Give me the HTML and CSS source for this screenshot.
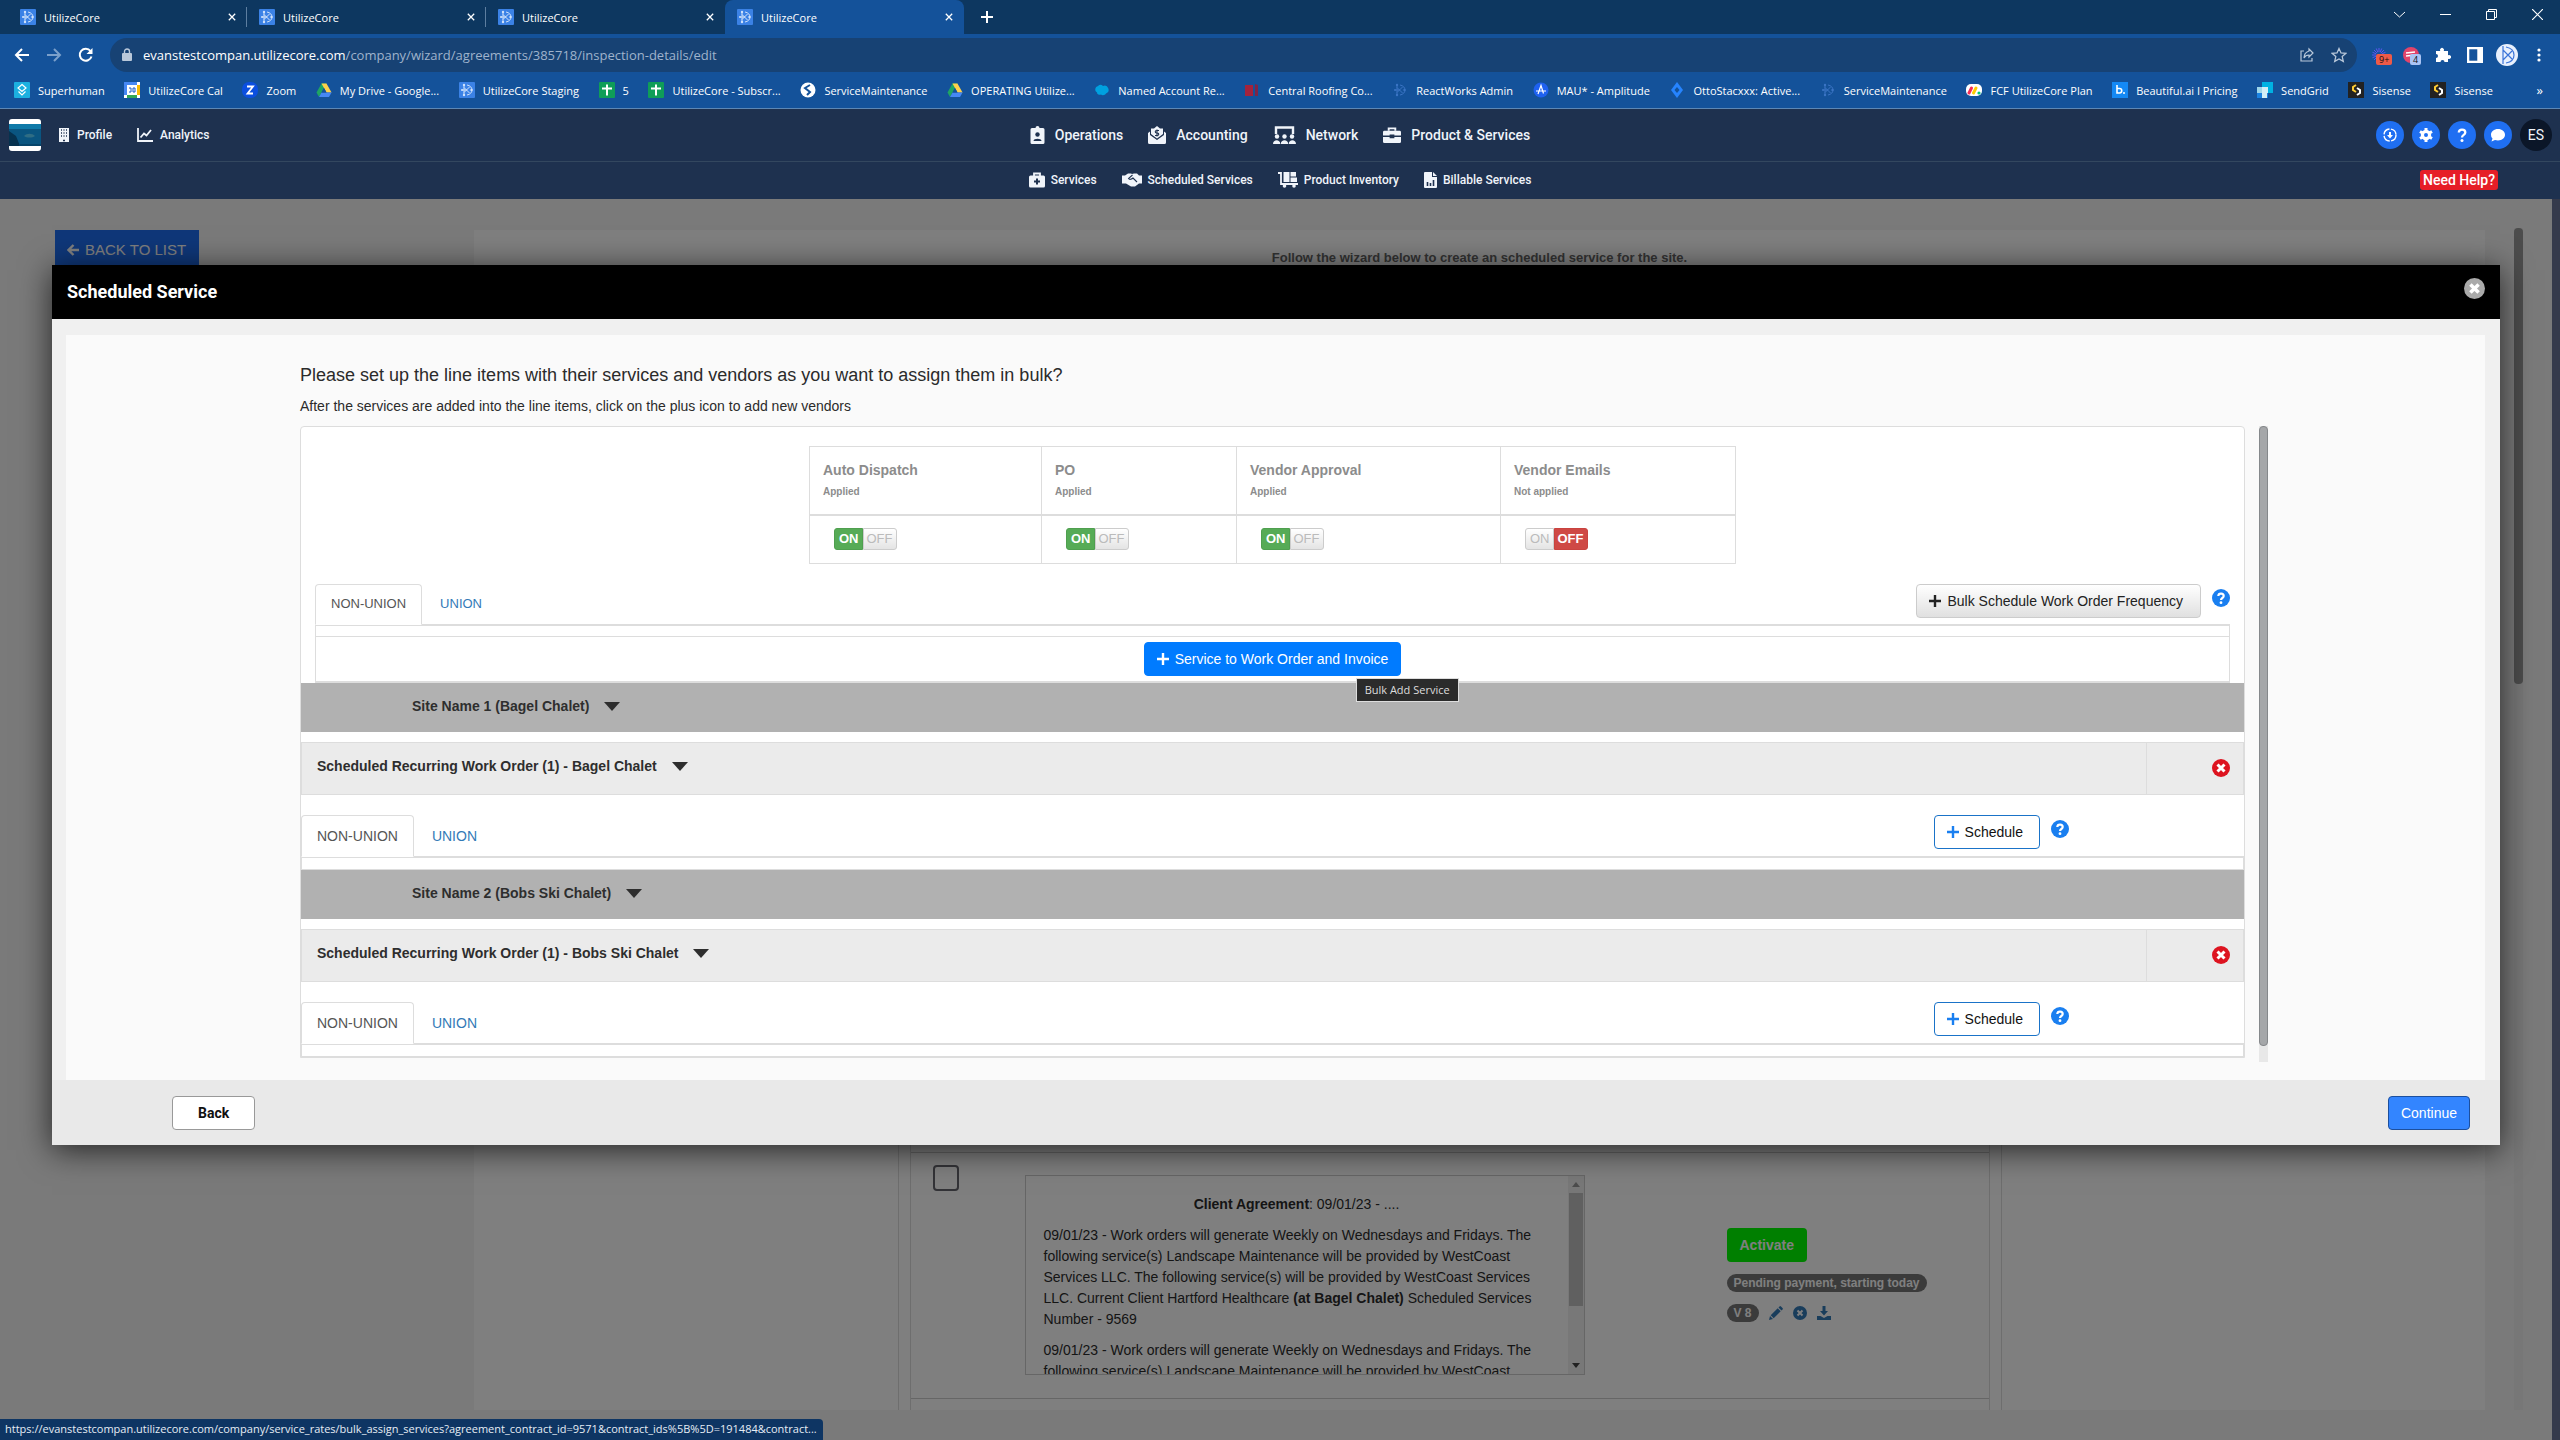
FILE: index.html
```html
<!DOCTYPE html>
<html lang="en">
<head>
    <meta charset="UTF-8">
    <meta name="viewport" content="width=device-width, initial-scale=1.0">
    <title>UtilizeCore</title>
    <link rel="stylesheet" href="styles.css">
</head>
<body>
    <!-- Icon sprite -->
    <svg class="sprite" aria-hidden="true">
        <symbol id="i-uc" viewBox="0 0 16 16"><rect width="16" height="16" rx="1" fill="#3b82e6"/><use href="#i-atom"/></symbol>
        <symbol id="i-atom" viewBox="0 0 16 16"><g fill="none" stroke="currentColor" stroke-width="1"><path d="M5 3v10M8 3c3 .500 5 2.500 5 5s-2 4.500-5 5M5 5.500L10.500 11M5 10.500L10.500 5M3 8h5"/></g><circle cx="5" cy="3" r="1.200" fill="currentColor"/><circle cx="12.500" cy="8" r="1.200" fill="currentColor"/><circle cx="5" cy="13" r="1.200" fill="currentColor"/><circle cx="3" cy="8" r="1" fill="currentColor"/></symbol>
        <symbol id="i-x" viewBox="0 0 10 10"><path d="M1 1l8 8M9 1L1 9" stroke="currentColor" stroke-width="1.600"/></symbol>
        <symbol id="i-plus" viewBox="0 0 12 12"><path d="M6 0v12M0 6h12" stroke="currentColor" stroke-width="2.400"/></symbol>
        <symbol id="i-back" viewBox="0 0 16 16"><path d="M15 8H2M8 2L2 8l6 6" fill="none" stroke="currentColor" stroke-width="2"/></symbol>
        <symbol id="i-reload" viewBox="0 0 16 16"><path d="M13.500 9.500A6 6 0 1 1 12.500 4" fill="none" stroke="currentColor" stroke-width="2"/><path d="M14.500 1v6h-6z" fill="currentColor"/></symbol>
        <symbol id="i-lock" viewBox="0 0 10 14"><rect y="5" width="10" height="8" rx="1" fill="currentColor"/><path d="M2.500 6V3.500a2.500 2.500 0 0 1 5 0V6" fill="none" stroke="currentColor" stroke-width="1.400"/></symbol>
        <symbol id="i-share" viewBox="0 0 16 16"><path d="M5 4H2v10h11v-3M10 2l4 4-4 4V8C7 8 6 9 5 11c0-4 2-6 5-7z" fill="none" stroke="currentColor" stroke-width="1.200"/></symbol>
        <symbol id="i-star" viewBox="0 0 16 16"><path d="M8 1.500l2 4.500 4.800.400-3.600 3.200 1.100 4.800L8 11.900l-4.300 2.500 1.100-4.800L1.200 6.400 6 6z" fill="none" stroke="currentColor" stroke-width="1.300"/></symbol>
        <symbol id="i-burst" viewBox="0 0 16 16"><path d="M8 1v14M1 8h14M3 3l10 10M13 3L3 13M5.300 1.500l5.400 13M1.500 10.700l13-5.400M1.500 5.300l13 5.400M10.700 1.500l-5.400 13" stroke="#5a55f0" stroke-width="1"/><circle cx="8" cy="8" r="3" fill="#14529a"/></symbol>
        <symbol id="i-puzzle" viewBox="0 0 16 16"><path d="M1 4h4.300a2 2 0 1 1 3.400 0H13v4.300a2 2 0 1 1 0 3.400V15H9.500a2 2 0 1 0-4 0H1v-4a2 2 0 1 0 0-4z" fill="currentColor"/></symbol>
        <symbol id="i-side" viewBox="0 0 14 14"><rect x="1" y="1" width="12" height="12" fill="none" stroke="currentColor" stroke-width="2"/><rect x="9" y="1" width="4" height="12" fill="currentColor"/></symbol>
        <symbol id="i-avatar" viewBox="0 0 22 22"><circle cx="11" cy="11" r="11" fill="#e8f0fd"/><path d="M7 2v18M7 6l9 9M7 16l9-9M10 3c5 1 8 4 8 8s-3 7-8 8" fill="none" stroke="#3b74d8" stroke-width="1.200"/></symbol>
        <symbol id="i-dots" viewBox="0 0 4 16"><circle cx="2" cy="3" r="1.600" fill="currentColor"/><circle cx="2" cy="8" r="1.600" fill="currentColor"/><circle cx="2" cy="13" r="1.600" fill="currentColor"/></symbol>
        <symbol id="i-drive" viewBox="0 0 16 16"><path d="M5.500 1.500h5L8 6 3 15 .500 10.500z" fill="#1fa463"/><path d="M5.500 1.500h5l5 9h-5z" fill="#ffd04b"/><path d="M3 15l2.500-4.500h10L13 15z" fill="#4688f4"/><path d="M8 6l2.500 4.500h-5z" fill="#14529a"/></symbol>
        <symbol id="i-super" viewBox="0 0 16 16"><rect width="16" height="16" rx="1" fill="#1cb0e0"/><path d="M8 2.500L12 6 8 9.500 4 6zM4.500 9.500L8 13l3.500-3.500" fill="none" stroke="#fff" stroke-width="1.200"/></symbol>
        <symbol id="i-cal" viewBox="0 0 16 16"><rect width="16" height="16" fill="#fff"/><path d="M0 0h13v3H3v10H0z" fill="#4688f4"/><path d="M13 3h3v10h-3z" fill="#fbbc04"/><path d="M3 13h10v3H3z" fill="#34a853"/><path d="M5 6h2v4H5M9 6h2v4H9z" fill="none" stroke="#1a5dc8"/></symbol>
        <symbol id="i-zoom" viewBox="0 0 16 16"><rect width="16" height="16" rx="7" fill="#0b4fe0"/><path d="M5 4.500h6L5.500 11.500H11" fill="none" stroke="#fff" stroke-width="1.800"/></symbol>
        <symbol id="i-sheet" viewBox="0 0 16 16"><rect width="16" height="16" rx="1" fill="#0f9d58"/><path d="M8 2.500v11M3 6.500h10" stroke="#fff" stroke-width="2"/></symbol>
        <symbol id="i-globe" viewBox="0 0 16 16"><circle cx="8" cy="8" r="7.500" fill="#fff"/><path d="M10 3L5 6l5 4-3 3" fill="none" stroke="#14529a" stroke-width="2"/></symbol>
        <symbol id="i-cloud" viewBox="0 0 16 16"><path d="M4 4a3.500 3.500 0 0 1 5 0 3.500 3.500 0 1 1 3 7.500c-1 2-4 2-5 1-3 1-4-1-4-2A3.500 3.500 0 0 1 4 4z" fill="#00a1e0"/></symbol>
        <symbol id="i-roof" viewBox="0 0 16 16"><path d="M1 3h8v11H1z" fill="#a3233c"/><path d="M11 2l3 1v11h-3z" fill="#7d2547"/></symbol>
        <symbol id="i-amp" viewBox="0 0 16 16"><circle cx="8" cy="8" r="7.500" fill="#1e61f0"/><path d="M3 9h10M5 12L8 3.500l2.500 8" fill="none" stroke="#fff" stroke-width="1.200"/></symbol>
        <symbol id="i-otto" viewBox="0 0 16 16"><path d="M8 0l6 8-6 8-6-8z" fill="#2684ff"/><path d="M8 5l2.500 3L8 11 5.500 8z" fill="#14529a"/></symbol>
        <symbol id="i-monday" viewBox="0 0 16 16"><rect y="2" width="16" height="12" rx="5" fill="#fff"/><path d="M3 11l2.500-5" stroke="#f62b54" stroke-width="3" stroke-linecap="round"/><path d="M7.500 11L10 6" stroke="#fc0" stroke-width="3" stroke-linecap="round"/><circle cx="13" cy="11" r="1.600" fill="#00c875"/></symbol>
        <symbol id="i-grid" viewBox="0 0 16 16"><path d="M5 0h11v11H5z" fill="#00b2e3"/><path d="M0 5h5v6H0z" fill="#9dd6ea"/><path d="M5 11h6v5H5zM0 11h5v5H0z" fill="#1a82e2"/><path d="M5 5h6v6H5zM5 11h5v5H5z" fill="#d3eef7"/></symbol>
        <symbol id="i-sis" viewBox="0 0 16 16"><rect width="16" height="16" fill="#222"/><path d="M8 3L5 5v3l3 2" fill="none" stroke="#fc3" stroke-width="2"/><path d="M9 6l3 2v3l-3 2" fill="none" stroke="#fff" stroke-width="2"/></symbol>
        <symbol id="i-bai" viewBox="0 0 16 16"><rect width="16" height="16" fill="#1489f5"/><path d="M5 3v8h2.500a2 2 0 0 0 0-4.500H5" fill="none" stroke="#fff" stroke-width="1.600"/><circle cx="12" cy="11" r="1" fill="#fff"/></symbol>

        <symbol id="i-building" viewBox="0 0 12 14"><path d="M1 0h10v14H1z" fill="currentColor"/><path d="M3 2h1M5.500 2h1M8 2h1M3 5h1M5.500 5h1M8 5h1M3 8h1M5.500 8h1M8 8h1M5 12.500h2" stroke="#1e314f" stroke-width="1.400"/></symbol>
        <symbol id="i-chart" viewBox="0 0 16 14"><path d="M1 0v13h15M3.500 9.500L7 5.500l2.500 2L14 2" fill="none" stroke="currentColor" stroke-width="1.800"/></symbol>
        <symbol id="i-badge" viewBox="0 0 15 18"><path d="M2 2h3.500a2 2 0 0 1 4 0H13a1.500 1.500 0 0 1 1.500 1.500v13A1.500 1.500 0 0 1 13 18H2A1.500 1.500 0 0 1 .500 16.500v-13A1.500 1.500 0 0 1 2 2z" fill="currentColor"/><circle cx="7.500" cy="8.500" r="2.200" fill="#1e314f"/><path d="M3.500 15c0-3 8-3 8 0z" fill="#1e314f"/></symbol>
        <symbol id="i-money" viewBox="0 0 18 18"><path d="M0 7l2-1.500V9l7 5 7-5V5.500L18 7v9.500a1.500 1.500 0 0 1-1.500 1.500h-15A1.500 1.500 0 0 1 0 16.500z" fill="currentColor"/><path d="M3 2.500h3L9 0l3 2.500h3V8l-6 4.500L3 8z" fill="currentColor"/><path d="M11 4.500H8.500a1.200 1.200 0 0 0 0 2.500h1a1.200 1.200 0 0 1 0 2.500H7M9 3.500v7" fill="none" stroke="#1e314f" stroke-width="1.100"/></symbol>
        <symbol id="i-network" viewBox="0 0 23 18"><path d="M3 8V1.500h17V8" fill="none" stroke="currentColor" stroke-width="2.400"/><circle cx="4" cy="10.500" r="2.200" fill="currentColor"/><circle cx="11.500" cy="10.500" r="2.200" fill="currentColor"/><circle cx="19" cy="10.500" r="2.200" fill="currentColor"/><path d="M0 18c0-5 7.300-5 7.300 0zM7.800 18c0-5 7.400-5 7.400 0zM15.700 18c0-5 7.300-5 7.300 0z" fill="currentColor"/></symbol>
        <symbol id="i-case" viewBox="0 0 19 17"><path d="M6 4V1.500h7V4" fill="none" stroke="currentColor" stroke-width="2"/><path d="M1.500 4h16A1.500 1.500 0 0 1 19 5.500V9h-7V8H7v1H0V5.500A1.500 1.500 0 0 1 1.500 4zM0 10.500h7v1.500h5v-1.500h7v5a1.500 1.500 0 0 1-1.500 1.500h-16A1.500 1.500 0 0 1 0 15.500z" fill="currentColor"/></symbol>
        <symbol id="i-medkit" viewBox="0 0 16 15"><path d="M5 4V1h6v3" fill="none" stroke="currentColor" stroke-width="1.800"/><rect y="3" width="16" height="12" rx="1.500" fill="currentColor"/><path d="M8 6v6M5 9h6" stroke="#1e314f" stroke-width="2"/></symbol>
        <symbol id="i-shake" viewBox="0 0 20 13"><path d="M0 2h3l3-2h3l1 .600L12 0h3l2 2h3v8h-3l-4 3H9L4 10H0z" fill="currentColor"/><path d="M10.500 1.500L6.500 5c1 1.500 3 .800 4.500-.500l4 4" fill="none" stroke="#1e314f" stroke-width="1.100"/></symbol>
        <symbol id="i-dolly" viewBox="0 0 20 16"><path d="M0 1h3v11h17" fill="none" stroke="currentColor" stroke-width="1.800"/><path d="M5.500 0h6v10h-6zM12.500 0H18v4.500h-5.500zM12.500 5.500H19V10h-6.500z" fill="currentColor"/><circle cx="6.500" cy="14" r="1.800" fill="currentColor"/><circle cx="16" cy="14" r="1.800" fill="currentColor"/></symbol>
        <symbol id="i-file" viewBox="0 0 13 16"><path d="M1 0h7v5h5v10a1 1 0 0 1-1 1H1a1 1 0 0 1-1-1V1a1 1 0 0 1 1-1zM9 0l4 4H9z" fill="currentColor"/><path d="M3.500 10v4M6.500 11v3M9.500 8v6" stroke="#1e314f" stroke-width="1.600"/></symbol>
        <symbol id="i-down" viewBox="0 0 16 16"><circle cx="8" cy="8" r="6" fill="none" stroke="#fff" stroke-width="1.400" stroke-dasharray="8 1.500"/><path d="M8 5v4" stroke="#fff" stroke-width="2"/><path d="M5 8h6l-3 3.500z" fill="#fff"/></symbol>
        <symbol id="i-gear" viewBox="0 0 16 16"><circle cx="8" cy="8" r="3.600" fill="none" stroke="#fff" stroke-width="3.200"/><path d="M8 1v3M8 12v3M2 4.500l2.500 1.500M11.500 10l2.500 1.500M14 4.500L11.500 6M4.500 10L2 11.500" stroke="#fff" stroke-width="3"/></symbol>
        <symbol id="i-q" viewBox="0 0 16 16"><path d="M4.800 5.500C5 1.500 11.300 1.800 11.300 5.500 11.300 8 8 7.800 8 10.500" fill="none" stroke="#fff" stroke-width="2.300"/><circle cx="8" cy="13.500" r="1.500" fill="#fff"/></symbol>
        <symbol id="i-chat" viewBox="0 0 16 16"><path d="M8 2c4 0 7 2.500 7 5.700s-3 5.700-7 5.700c-1 0-2-.200-3-.500L1.500 14.500l1-3A5 5 0 0 1 1 7.700C1 4.500 4 2 8 2z" fill="#fff"/></symbol>

        <symbol id="i-arrow" viewBox="0 0 12 12"><path d="M12 6H2M6.500 1L1.500 6l5 5" fill="none" stroke="currentColor" stroke-width="2.400"/></symbol>
        <symbol id="i-times" viewBox="0 0 18 18"><circle cx="9" cy="9" r="9" fill="currentColor"/><path d="M5.500 5.500l7 7M12.500 5.500l-7 7" stroke="#fff" stroke-width="3"/></symbol>
        <symbol id="i-help" viewBox="0 0 18 18"><circle cx="9" cy="9" r="9" fill="#1a7ff0"/><path d="M6.300 7C6.500 3.600 11.700 3.900 11.700 7 11.700 9 9 9 9 11" fill="none" stroke="#fff" stroke-width="2.200"/><circle cx="9" cy="13.700" r="1.400" fill="#fff"/></symbol>
        <symbol id="i-caret" viewBox="0 0 16 9"><path d="M0 0h16L8 9z" fill="currentColor"/></symbol>
        <symbol id="i-pencil" viewBox="0 0 14 14"><path d="M0 14l1-4 3 3zM1.700 9.300l7-7 3 3-7 7zM9.500 1.500l1-1a1 1 0 0 1 1.500 0l1.500 1.500a1 1 0 0 1 0 1.500l-1 1z" fill="currentColor"/></symbol>
        <symbol id="i-cross" viewBox="0 0 14 14"><circle cx="7" cy="7" r="7" fill="currentColor"/><path d="M4.500 4.500l5 5M9.500 4.500l-5 5" stroke="#fff" stroke-width="2"/></symbol>
        <symbol id="i-dl" viewBox="0 0 14 14"><path d="M5.500 0h3v5H11L7 9.500 3 5h2.500zM0 10h3.500L7 12l3.500-2H14v4H0z" fill="currentColor"/></symbol>
    </svg>

    <!-- Browser -->
    <div class="browser">
        <div class="tab-strip">
            <div class="browser-tab"><svg class="favicon"><use href="#i-uc"/></svg><span>UtilizeCore</span><button class="tab-close" aria-label="Close tab"><svg><use href="#i-x"/></svg></button></div>
            <div class="browser-tab"><svg class="favicon"><use href="#i-uc"/></svg><span>UtilizeCore</span><button class="tab-close" aria-label="Close tab"><svg><use href="#i-x"/></svg></button></div>
            <div class="browser-tab"><svg class="favicon"><use href="#i-uc"/></svg><span>UtilizeCore</span><button class="tab-close" aria-label="Close tab"><svg><use href="#i-x"/></svg></button></div>
            <div class="browser-tab active"><svg class="favicon"><use href="#i-uc"/></svg><span>UtilizeCore</span><button class="tab-close" aria-label="Close tab"><svg><use href="#i-x"/></svg></button></div>
            <button class="new-tab" aria-label="New tab"><svg viewBox="0 0 12 12"><path d="M6 0v12M0 6h12" stroke="#fff" stroke-width="2"/></svg></button>
            <div class="window-buttons">
                <button aria-label="Search tabs"><svg viewBox="0 0 11 11"><path d="M0 3l5.500 5L11 3" fill="none" stroke="#fff"/></svg></button>
                <button aria-label="Minimize"><svg viewBox="0 0 11 11"><path d="M0 5.500h11" stroke="#fff"/></svg></button>
                <button aria-label="Restore"><svg viewBox="0 0 11 11"><path d="M.500 2.500h8v8h-8zM2.500 2V.500h8v8H9" fill="none" stroke="#fff"/></svg></button>
                <button aria-label="Close"><svg viewBox="0 0 11 11"><path d="M0 0l11 11M11 0L0 11" stroke="#fff" stroke-width="1.200"/></svg></button>
            </div>
        </div>
        <div class="toolbar">
            <button class="nav-btn" aria-label="Back"><svg><use href="#i-back"/></svg></button>
            <button class="nav-btn forward" aria-label="Forward"><svg><use href="#i-back"/></svg></button>
            <button class="nav-btn" aria-label="Reload"><svg><use href="#i-reload"/></svg></button>
            <div class="omnibox">
                <svg class="lock"><use href="#i-lock"/></svg>
                <div class="url"><b>evanstestcompan.utilizecore.com</b>/company/wizard/agreements/385718/inspection-details/edit</div>
                <button aria-label="Share"><svg><use href="#i-share"/></svg></button>
                <button aria-label="Bookmark"><svg><use href="#i-star"/></svg></button>
            </div>
            <div class="extensions">
                <button class="ext" aria-label="Extension"><svg><use href="#i-burst"/></svg><span class="ext-count red">9+</span></button>
                <button class="ext" aria-label="Extension"><svg viewBox="0 0 16 16"><circle cx="8" cy="8" r="8" fill="#e2446a"/><path d="M3 6l9-1M3 9l10-1" stroke="#fff" stroke-width="1.500"/></svg><span class="ext-count">4</span></button>
                <button class="ext" aria-label="Extensions"><svg><use href="#i-puzzle"/></svg></button>
                <button class="ext" aria-label="Side panel"><svg><use href="#i-side"/></svg></button>
                <button class="ext avatar" aria-label="Profile"><svg><use href="#i-avatar"/></svg></button>
                <button class="ext" aria-label="Menu"><svg><use href="#i-dots"/></svg></button>
            </div>
        </div>
        <div class="bookmarks">
            <a href="#"><svg><use href="#i-super"/></svg>Superhuman</a>
            <a href="#"><svg><use href="#i-cal"/></svg>UtilizeCore Cal</a>
            <a href="#"><svg><use href="#i-zoom"/></svg>Zoom</a>
            <a href="#"><svg><use href="#i-drive"/></svg>My Drive - Google...</a>
            <a href="#"><svg><use href="#i-uc"/></svg>UtilizeCore Staging</a>
            <a href="#"><svg><use href="#i-sheet"/></svg>5</a>
            <a href="#"><svg><use href="#i-sheet"/></svg>UtilizeCore - Subscr...</a>
            <a href="#"><svg><use href="#i-globe"/></svg>ServiceMaintenance</a>
            <a href="#"><svg><use href="#i-drive"/></svg>OPERATING Utilize...</a>
            <a href="#"><svg><use href="#i-cloud"/></svg>Named Account Re...</a>
            <a href="#"><svg><use href="#i-roof"/></svg>Central Roofing Co...</a>
            <a href="#"><svg class="dim"><use href="#i-atom"/></svg>ReactWorks Admin</a>
            <a href="#"><svg><use href="#i-amp"/></svg>MAU* - Amplitude</a>
            <a href="#"><svg><use href="#i-otto"/></svg>OttoStacxxx: Active...</a>
            <a href="#"><svg class="dim"><use href="#i-atom"/></svg>ServiceMaintenance</a>
            <a href="#"><svg><use href="#i-monday"/></svg>FCF UtilizeCore Plan</a>
            <a href="#"><svg><use href="#i-bai"/></svg>Beautiful.ai I Pricing</a>
            <a href="#"><svg><use href="#i-grid"/></svg>SendGrid</a>
            <a href="#"><svg><use href="#i-sis"/></svg>Sisense</a>
            <a href="#"><svg><use href="#i-sis"/></svg>Sisense</a>
            <button class="more">»</button>
        </div>
    </div>

    <!-- App header -->
    <header class="app-header">
        <div class="nav-main">
            <div class="nav-left">
                <a href="#" class="logo" aria-label="Home"><svg viewBox="0 0 32 32"><rect width="32" height="32" rx="3" fill="#fff"/><path d="M0 5h32v22H0z" fill="#0a5580"/><path d="M0 5h32v5H0z" fill="#0f79a8"/><path d="M0 12l7 5 4 10H0z" fill="#06324f"/><path d="M15 17c3-3 8-3 11 0-3 2-8 2-11 0z" fill="#2f6d84"/><path d="M10 25h22v2H10z" fill="#06456b"/></svg></a>
                <a href="#"><svg class="w12"><use href="#i-building"/></svg>Profile</a>
                <a href="#"><svg class="w16"><use href="#i-chart"/></svg>Analytics</a>
            </div>
            <nav class="nav-center">
                <a href="#"><svg class="w15"><use href="#i-badge"/></svg>Operations</a>
                <a href="#"><svg class="w18"><use href="#i-money"/></svg>Accounting</a>
                <a href="#"><svg class="w23"><use href="#i-network"/></svg>Network</a>
                <a href="#"><svg class="w18"><use href="#i-case"/></svg>Product &amp; Services</a>
            </nav>
            <div class="nav-right">
                <button aria-label="Downloads"><svg><use href="#i-down"/></svg></button>
                <button aria-label="Settings"><svg><use href="#i-gear"/></svg></button>
                <button aria-label="Help"><svg><use href="#i-q"/></svg></button>
                <button aria-label="Chat"><svg><use href="#i-chat"/></svg></button>
                <button class="user">ES</button>
            </div>
        </div>
        <div class="nav-sub">
            <div></div>
            <nav class="nav-center">
                <a href="#"><svg class="w16"><use href="#i-medkit"/></svg>Services</a>
                <a href="#"><svg class="w20"><use href="#i-shake"/></svg>Scheduled Services</a>
                <a href="#"><svg class="w20"><use href="#i-dolly"/></svg>Product Inventory</a>
                <a href="#"><svg class="w13"><use href="#i-file"/></svg>Billable Services</a>
            </nav>
            <div class="need-help"><a href="#">Need Help?</a></div>
        </div>
    </header>

    <div class="page">
        <div class="page-main">
            <div class="side"><a href="#" class="back-to-list"><svg><use href="#i-arrow"/></svg>BACK TO LIST</a></div>
            <div class="wizard">
                <p class="wizard-note">Follow the wizard below to create an scheduled service for the site.</p>
                <div class="agreements">
                    <div class="agreement-table">
                        <div class="agreement-row">
                            <input type="checkbox" class="pick" aria-label="Select agreement">
                            <div class="agreement">
                                <div class="agreement-text">
                                    <p class="agreement-title"><b>Client Agreement</b>: 09/01/23 - ....</p>
                                    <p>09/01/23 - Work orders will generate Weekly on Wednesdays and Fridays. The following service(s) Landscape Maintenance will be provided by WestCoast Services LLC. The following service(s) will be provided by WestCoast Services LLC. Current Client Hartford Healthcare <b>(at Bagel Chalet)</b> Scheduled Services Number - 9569</p>
                                    <p>09/01/23 - Work orders will generate Weekly on Wednesdays and Fridays. The following service(s) Landscape Maintenance will be provided by WestCoast</p>
                                </div>
                                <div class="agreement-scroll"><svg viewBox="0 0 8 5"><path d="M0 5h8L4 0z" fill="#999"/></svg><div class="thumb"></div><svg viewBox="0 0 8 5"><path d="M0 0h8L4 5z" fill="#444"/></svg></div>
                            </div>
                            <div class="agreement-actions">
                                <button class="activate">Activate</button>
                                <span class="pill">Pending payment, starting today</span>
                                <div class="version">
                                    <span class="pill">V 8</span>
                                    <a href="#" aria-label="Edit"><svg><use href="#i-pencil"/></svg></a>
                                    <a href="#" aria-label="Cancel"><svg><use href="#i-cross"/></svg></a>
                                    <a href="#" aria-label="Download"><svg><use href="#i-dl"/></svg></a>
                                </div>
                            </div>
                        </div>
                    </div>
                </div>
            </div>
            <div class="page-scroll"><div class="thumb"></div></div>
            <div class="backdrop"></div>
        </div>
        <div class="window-scroll"></div>

        <!-- Modal -->
        <div class="modal" role="dialog" aria-labelledby="modalTitle">
            <div class="modal-header">
                <h1 id="modalTitle">Scheduled Service</h1>
                <button class="modal-close" aria-label="Close"><svg><use href="#i-times"/></svg></button>
            </div>
            <div class="modal-body">
                <div class="modal-content">
                    <h2>Please set up the line items with their services and vendors as you want to assign them in bulk?</h2>
                    <p class="hint">After the services are added into the line items, click on the plus icon to add new vendors</p>
                    <div class="scroll-area">
                        <div class="panel">
                            <table class="settings">
                                <thead>
                                    <tr>
                                        <th class="c-dispatch">Auto Dispatch<small>Applied</small></th>
                                        <th class="c-po">PO<small>Applied</small></th>
                                        <th class="c-approval">Vendor Approval<small>Applied</small></th>
                                        <th class="c-emails">Vendor Emails<small>Not applied</small></th>
                                    </tr>
                                </thead>
                                <tbody>
                                    <tr>
                                        <td><label class="switch"><input type="checkbox" aria-label="Auto Dispatch" checked><span class="on">ON</span><span class="off">OFF</span></label></td>
                                        <td><label class="switch"><input type="checkbox" aria-label="PO" checked><span class="on">ON</span><span class="off">OFF</span></label></td>
                                        <td><label class="switch"><input type="checkbox" aria-label="Vendor Approval" checked><span class="on">ON</span><span class="off">OFF</span></label></td>
                                        <td><label class="switch"><input type="checkbox" aria-label="Vendor Emails"><span class="on">ON</span><span class="off">OFF</span></label></td>
                                    </tr>
                                </tbody>
                            </table>

                            <div class="bulk">
                                <div class="tabs small">
                                    <a href="#" class="tab active">NON-UNION</a>
                                    <a href="#" class="tab">UNION</a>
                                    <div class="actions">
                                        <button class="btn btn-default"><svg class="plus"><use href="#i-plus"/></svg>Bulk Schedule Work Order Frequency</button>
                                        <svg class="help"><use href="#i-help"/></svg>
                                    </div>
                                </div>
                                <div class="tab-body">
                                    <div class="bulk-add">
                                        <button class="btn btn-primary"><svg class="plus"><use href="#i-plus"/></svg>Service to Work Order and Invoice<span class="tooltip">Bulk Add Service</span></button>
                                    </div>
                                </div>
                            </div>

                            <div class="site">
                                <div class="site-name">Site Name 1 (Bagel Chalet)<svg><use href="#i-caret"/></svg></div>
                                <div class="work-order">
                                    <div class="work-order-name">Scheduled Recurring Work Order (1) - Bagel Chalet<svg><use href="#i-caret"/></svg></div>
                                    <button class="remove" aria-label="Remove"><svg><use href="#i-times"/></svg></button>
                                </div>
                                <div class="tabs">
                                    <a href="#" class="tab active">NON-UNION</a>
                                    <a href="#" class="tab">UNION</a>
                                    <div class="actions">
                                        <button class="btn btn-outline"><svg class="plus"><use href="#i-plus"/></svg>Schedule</button>
                                        <svg class="help"><use href="#i-help"/></svg>
                                    </div>
                                </div>
                                <div class="tab-body"></div>
                            </div>

                            <div class="site">
                                <div class="site-name">Site Name 2 (Bobs Ski Chalet)<svg><use href="#i-caret"/></svg></div>
                                <div class="work-order">
                                    <div class="work-order-name">Scheduled Recurring Work Order (1) - Bobs Ski Chalet<svg><use href="#i-caret"/></svg></div>
                                    <button class="remove" aria-label="Remove"><svg><use href="#i-times"/></svg></button>
                                </div>
                                <div class="tabs">
                                    <a href="#" class="tab active">NON-UNION</a>
                                    <a href="#" class="tab">UNION</a>
                                    <div class="actions">
                                        <button class="btn btn-outline"><svg class="plus"><use href="#i-plus"/></svg>Schedule</button>
                                        <svg class="help"><use href="#i-help"/></svg>
                                    </div>
                                </div>
                                <div class="tab-body"></div>
                            </div>
                        </div>
                        <div class="panel-scroll"><div class="thumb"></div></div>
                    </div>
                </div>
            </div>
            <div class="modal-footer">
                <button class="btn btn-back">Back</button>
                <button class="btn btn-continue">Continue</button>
            </div>
        </div>

        <div class="status-bar">https://evanstestcompan.utilizecore.com/company/service_rates/bulk_assign_services?agreement_contract_id=9571&amp;contract_ids%5B%5D=191484&amp;contract...</div>
    </div>
</body>
</html>
```
FILE: styles.css
```css
* {
    box-sizing: border-box;
}
body {
    margin: 0;
    min-height: 100vh;
    display: flex;
    flex-direction: column;
    font-family: "Liberation Sans", Arial, sans-serif;
    font-size: 14px;
    color: #2b2b2b;
}
a {
    color: inherit;
    text-decoration: none;
}
button {
    font: inherit;
    color: inherit;
    background: none;
    border: none;
    padding: 0;
    cursor: pointer;
}
svg {
    display: block;
    flex: none;
}
.sprite {
    position: absolute;
    width: 0;
    height: 0;
}

/* Browser */
.browser {
    font-family: "Open Sans", "Noto Sans", sans-serif;
    font-size: 11px;
    color: #fff;
    background-color: #14529a;
    border-bottom: 1px solid #5c87b5;
}
.tab-strip {
    display: flex;
    align-items: center;
    height: 34px;
    padding-left: 8px;
    background-color: #0d3760;
}
.browser-tab {
    display: flex;
    align-items: center;
    gap: 8px;
    width: 239px;
    height: 34px;
    padding: 0 10px 0 12px;
}
.browser-tab.active {
    background-color: #14529a;
    border-radius: 8px 8px 0 0;
}
.favicon {
    width: 16px;
    height: 16px;
    color: #cfe2fb;
}
.tab-close {
    margin-left: auto;
    padding: 0 1px;
}
.tab-close svg {
    width: 8px;
    height: 8px;
}
.browser-tab:nth-child(-n+2) {
    background: linear-gradient(#5d7ea0, #5d7ea0) right center / 1px 20px no-repeat;
}
.new-tab {
    margin-left: 17px;
}
.new-tab svg {
    width: 12px;
    height: 12px;
}
.window-buttons {
    display: flex;
    align-self: flex-start;
    margin-left: auto;
}
.window-buttons button {
    display: flex;
    justify-content: center;
    align-items: center;
    width: 46px;
    height: 28px;
}
.window-buttons svg {
    width: 11px;
    height: 11px;
}
.toolbar {
    display: flex;
    align-items: center;
    gap: 16px;
    height: 38px;
    padding: 4px 5px 0 14px;
}
.nav-btn svg {
    width: 16px;
    height: 16px;
}
.nav-btn.forward {
    color: #7ba0cb;
    transform: rotate(180deg);
}
.omnibox {
    display: flex;
    align-items: center;
    gap: 16px;
    flex: 1;
    height: 34px;
    padding: 0 10px 0 12px;
    border-radius: 17px;
    background-color: #174274;
    color: #b9c8da;
}
.omnibox .lock {
    width: 10px;
    height: 14px;
    margin-right: -5px;
}
.omnibox button svg {
    width: 16px;
    height: 16px;
}
.url {
    flex: 1;
    font-size: 13px;
    color: #9fb3cc;
}
.url b {
    font-weight: 400;
    color: #fff;
}
.extensions {
    display: flex;
    align-items: center;
    margin-left: -10px;
}
.ext {
    position: relative;
    display: flex;
    justify-content: center;
    width: 32px;
}
.ext svg {
    width: 16px;
    height: 16px;
}
.avatar svg {
    width: 22px;
    height: 22px;
}
.ext-count {
    position: absolute;
    top: 7px;
    left: 15px;
    padding: 0 3px;
    border-radius: 2px;
    background-color: #a9c4f5;
    color: #111;
    font-size: 9px;
    line-height: 11px;
}
.ext-count.red {
    left: 13px;
    background-color: #ee5a48;
}
.bookmarks {
    display: flex;
    justify-content: space-between;
    align-items: center;
    height: 36px;
    padding: 0 17px 0 14px;
    white-space: nowrap;
}
.bookmarks a {
    display: flex;
    align-items: center;
    gap: 8px;
}
.bookmarks svg {
    width: 16px;
    height: 16px;
    color: #cfe2fb;
}
.bookmarks .dim {
    color: #3b74c4;
}
.bookmarks .more {
    margin-left: 24px;
    font-size: 13px;
}

/* App header */
.app-header {
    background-color: #1e314f;
    color: #f0f4fa;
    font-family: Roboto, sans-serif;
    font-weight: 500;
}
.nav-main, .nav-sub {
    display: grid;
    grid-template-columns: 1fr auto 1fr;
    align-items: center;
}
.nav-main {
    height: 53px;
    border-bottom: 1px solid #33475f;
}
.nav-sub {
    height: 37px;
    padding-bottom: 2px;
    font-size: 12px;
}
.nav-left, .nav-center, .nav-right {
    display: flex;
    align-items: center;
}
.nav-left {
    gap: 25px;
    padding-left: 9px;
    font-size: 12px;
}
.nav-left .logo {
    margin-right: -8px;
}
.nav-left .logo svg {
    width: 32px;
    height: 32px;
}
.nav-left a {
    display: flex;
    align-items: center;
    gap: 7px;
}
.nav-left .w12, .nav-left .w16 {
    height: 14px;
}
.nav-center {
    gap: 25px;
}
.nav-center a {
    display: flex;
    align-items: center;
    gap: 10px;
}
.nav-sub .nav-center a {
    gap: 6px;
}
.nav-center svg {
    height: 18px;
}
.nav-sub .nav-center svg {
    height: 16px;
}
.w12 { width: 12px; }
.w13 { width: 13px; }
.w15 { width: 15px; }
.w16 { width: 16px; }
.w18 { width: 18px; }
.w20 { width: 20px; }
.w23 { width: 23px; }
.nav-right {
    justify-content: flex-end;
    gap: 8px;
    padding-right: 8px;
}
.nav-right button {
    display: flex;
    justify-content: center;
    align-items: center;
    width: 28px;
    height: 28px;
    border-radius: 50%;
    background-color: #1f6ff2;
}
.nav-right svg {
    width: 16px;
    height: 16px;
}
.nav-right .user {
    width: 32px;
    height: 32px;
    background-color: #0b1628;
    font-weight: 400;
}
.need-help {
    display: flex;
    justify-content: flex-end;
    padding-right: 62px;
    font-size: 14px;
}
.need-help a {
    padding: 2px 3px;
    border-radius: 3px;
    background-color: #e61e27;
    color: #fff;
    line-height: 16px;
}

/* Page behind the modal */
.page {
    position: relative;
    display: flex;
    flex: 1;
}
.page-main {
    position: relative;
    display: flex;
    flex: 1;
    padding: 31px 29px 30px 0;
    background-color: #f5f5f5;
}
.backdrop {
    position: absolute;
    inset: 0;
    background-color: rgba(0, 0, 0, 0.5);
}
.window-scroll {
    width: 8px;
    background-color: #353a4b;
}
.side {
    width: 474px;
    padding-left: 55px;
}
.back-to-list {
    display: inline-flex;
    align-items: center;
    gap: 6px;
    padding: 10px 13px 10px 12px;
    background-color: #1f6ff2;
    color: #fff;
    font-size: 15px;
    line-height: 20px;
}
.back-to-list svg {
    width: 12px;
    height: 12px;
}
.wizard {
    display: flex;
    flex-direction: column;
    align-items: center;
    flex: 1;
    background-color: #fff;
}
.wizard-note {
    margin: 18px 0;
    font-size: 13px;
    font-weight: 700;
    line-height: 20px;
    color: #666;
}
.agreements {
    display: flex;
    flex: 1;
    width: 1104px;
    margin-right: 60px;
    padding: 0 11px;
    border: solid #ddd;
    border-width: 0 1px;
}
.agreement-table {
    display: flex;
    flex-direction: column;
    justify-content: flex-end;
    flex: 1;
    padding-bottom: 11px;
    border: solid #ddd;
    border-width: 0 1px;
}
.agreement-row {
    display: flex;
    height: 247px;
    padding: 22px 0 0 22px;
    border: solid #ccc;
    border-width: 1px 0;
}
.pick {
    appearance: none;
    width: 26px;
    height: 26px;
    margin: -10px 66px 0 0;
    border: 2px solid #66666e;
    border-radius: 4px;
}
.agreement {
    display: flex;
    width: 560px;
    height: 200px;
    overflow: hidden;
    border: 1px solid #ccc;
}
.agreement-text {
    flex: 1;
    padding: 18px;
    line-height: 21px;
}
.agreement-text p {
    margin: 0 0 10px;
}
.agreement-text .agreement-title {
    text-align: center;
}
.agreement-scroll {
    display: flex;
    flex-direction: column;
    align-items: center;
    width: 16px;
    padding: 6px 1px;
    background-color: #f1f1f1;
}
.agreement-scroll .thumb {
    width: 14px;
    height: 113px;
    margin: 6px 0 auto;
    background-color: #c1c1c1;
}
.agreement-scroll svg {
    width: 8px;
    height: 5px;
}
.agreement-actions {
    display: flex;
    flex-direction: column;
    align-items: flex-start;
    gap: 12px;
    margin: 53px 0 0 142px;
}
.activate {
    height: 34px;
    padding: 0 13px;
    border-radius: 4px;
    background-color: #00ff00;
    color: #fff;
    font-weight: 700;
}
.pill {
    padding: 0 7px;
    border-radius: 9px;
    background-color: #777;
    color: #fff;
    font-size: 12px;
    font-weight: 700;
    line-height: 18px;
}
.version {
    display: flex;
    align-items: center;
    gap: 10px;
    color: #337ab7;
}
.version svg {
    width: 14px;
    height: 14px;
}
.page-scroll {
    width: 9px;
    margin: -2px 0 0 29px;
    background-color: #eee;
}
.page-scroll .thumb {
    height: 456px;
    border-radius: 4px;
    background-color: #999;
}

/* Modal */
.modal {
    position: absolute;
    top: 66px;
    left: 52px;
    right: 60px;
    box-shadow: 0 5px 30px rgba(0, 0, 0, 0.7);
}
.modal-header {
    display: flex;
    justify-content: space-between;
    align-items: center;
    height: 54px;
    padding: 0 15px 2px;
    background-color: #000;
    color: #fff;
}
.modal-header h1 {
    margin: 0;
    font-family: Roboto, sans-serif;
    font-size: 18px;
    font-weight: 700;
}
.modal-close {
    align-self: flex-start;
    margin-top: 13px;
    color: #aaa;
}
.modal-close svg {
    width: 21px;
    height: 21px;
}
.modal-body {
    padding: 16px 15px 0 14px;
    background-color: #f0f0f0;
}
.modal-content {
    padding: 26px 217px 18px 234px;
    background-color: #fafafa;
}
.modal-content h2 {
    margin: 0 0 7px;
    font-size: 18px;
    font-weight: 400;
    line-height: 28px;
}
.hint {
    margin: 0 0 10px;
    line-height: 20px;
}
.scroll-area {
    display: flex;
    gap: 14px;
}
.panel {
    flex: 1;
    margin-bottom: 4px;
    border: 1px solid #ddd;
    border-radius: 4px 4px 0 0;
    background-color: #fff;
}
.panel-scroll {
    width: 9px;
    background-color: #e8e8e8;
}
.panel-scroll .thumb {
    height: 620px;
    border: 1px solid #85888b;
    border-radius: 4px;
    background-color: #a5a7a9;
}
.settings {
    margin: 19px auto 20px;
    border-collapse: collapse;
}
.settings th, .settings td {
    padding: 0 13px;
    border: 1px solid #ddd;
    text-align: left;
}
.settings th {
    height: 68px;
    padding-top: 2px;
    border-bottom-width: 2px;
    color: #8c8c8c;
    line-height: 20px;
}
.settings small {
    display: block;
    padding-top: 2px;
    font-size: 10px;
}
.settings td {
    height: 49px;
    padding: 0 24px;
}
.c-dispatch { width: 232px; }
.c-po { width: 195px; }
.c-approval { width: 264px; }
.c-emails { width: 235px; }
.switch {
    display: inline-flex;
    font-size: 13px;
    line-height: 20px;
    cursor: pointer;
}
.switch input {
    position: absolute;
    opacity: 0;
}
.switch span {
    padding: 0 3px;
    border: 1px solid #ccc;
    background: linear-gradient(#fff, #e4e4e4);
    color: #bbb;
}
.switch .on {
    padding-left: 4px;
    border-radius: 3px 0 0 3px;
}
.switch .off {
    border-radius: 0 3px 3px 0;
}
.switch input:checked + .on {
    border-color: #4f9f4f;
    background: #56ab56;
    color: #fff;
    font-weight: 700;
}
.switch input:not(:checked) ~ .off {
    border-color: #c9433f;
    background: #cf4945;
    color: #fff;
    font-weight: 700;
}
.bulk {
    margin: 0 14px;
}
.tabs {
    display: flex;
    gap: 2px;
    height: 42px;
    border-bottom: 1px solid #ddd;
}
.tabs.small {
    height: 41px;
}
.tab {
    height: 42px;
    padding: 0 15px;
    border: 1px solid transparent;
    color: #337ab7;
    line-height: 40px;
}
.tabs.small .tab {
    height: 41px;
    font-size: 13px;
    line-height: 38px;
}
.tab.active {
    border-color: #ddd #ddd #fff;
    border-radius: 4px 4px 0 0;
    background-color: #fff;
    color: #555;
}
.actions {
    display: flex;
    align-items: flex-start;
    gap: 11px;
    margin: 0 175px 0 auto;
}
.small .actions {
    margin-right: 0;
}
.help {
    width: 18px;
    height: 18px;
    margin-top: 5px;
}
.tab-body {
    min-height: 13px;
    border: 1px solid #ddd;
}
.bulk-add {
    display: flex;
    justify-content: center;
    margin-top: 10px;
    padding: 5px;
    border: solid #ddd;
    border-width: 1px 0;
}
.btn {
    display: flex;
    align-items: center;
    gap: 6px;
    height: 34px;
    padding: 0 12px;
    border: 1px solid;
    border-radius: 4px;
    font-size: 14px;
}
.plus {
    width: 12px;
    height: 12px;
}
.btn-default {
    padding: 0 17px 0 12px;
    border-color: #ccc;
    background: linear-gradient(#fff, #e0e0e0);
    color: #222;
}
.btn-primary {
    position: relative;
    border-color: #007bff;
    background-color: #007bff;
    color: #fff;
}
.btn-outline {
    padding: 0 16px 0 12px;
    border-color: #1a73c8;
    background-color: #fff;
    color: #111;
}
.btn-outline .plus {
    color: #1a7ff0;
}
.tooltip {
    position: absolute;
    top: 35px;
    left: 211px;
    z-index: 1;
    padding: 2px 8px;
    border: 1px solid #ddd;
    background-color: #2b2b2b;
    color: #ddd;
    font-family: "Open Sans", "Noto Sans", sans-serif;
    font-size: 11px;
    line-height: 18px;
    white-space: nowrap;
}
.site-name {
    display: flex;
    align-items: center;
    gap: 15px;
    height: 49px;
    padding: 0 0 3px 111px;
    background-color: #b1b1b1;
    color: #2e2e2e;
    font-weight: 700;
}
.site-name svg, .work-order svg {
    width: 16px;
    height: 9px;
}
.work-order {
    display: flex;
    height: 53px;
    margin: 10px 0 20px;
    border: 1px solid #ddd;
    background-color: #ebebeb;
    color: #2e2e2e;
    font-weight: 700;
}
.work-order-name {
    display: flex;
    align-items: center;
    gap: 15px;
    flex: 1;
    padding: 0 0 5px 15px;
}
.remove {
    display: flex;
    justify-content: flex-end;
    align-items: center;
    width: 97px;
    padding: 0 13px 2px 0;
    border-left: 1px solid #ddd;
    color: #dd1420;
}
.work-order .remove svg {
    width: 18px;
    height: 18px;
}
.modal-footer {
    display: flex;
    justify-content: space-between;
    padding: 16px 30px 15px 120px;
    background-color: #e9e9e9;
}
.btn-back {
    padding: 0 25px;
    border-color: #999;
    background-color: #fff;
    color: #111;
    font-family: Roboto, sans-serif;
    font-weight: 700;
}
.btn-continue {
    border-color: #1c4f9e;
    background-color: #3385ff;
    color: #fff;
}

.status-bar {
    position: absolute;
    left: 0;
    bottom: 0;
    padding: 0 6px 2px 5px;
    border-radius: 0 4px 0 0;
    background-color: #0e3563;
    color: #e6edf5;
    font-family: "Open Sans", "Noto Sans", sans-serif;
    font-size: 11px;
    line-height: 19px;
}
```
